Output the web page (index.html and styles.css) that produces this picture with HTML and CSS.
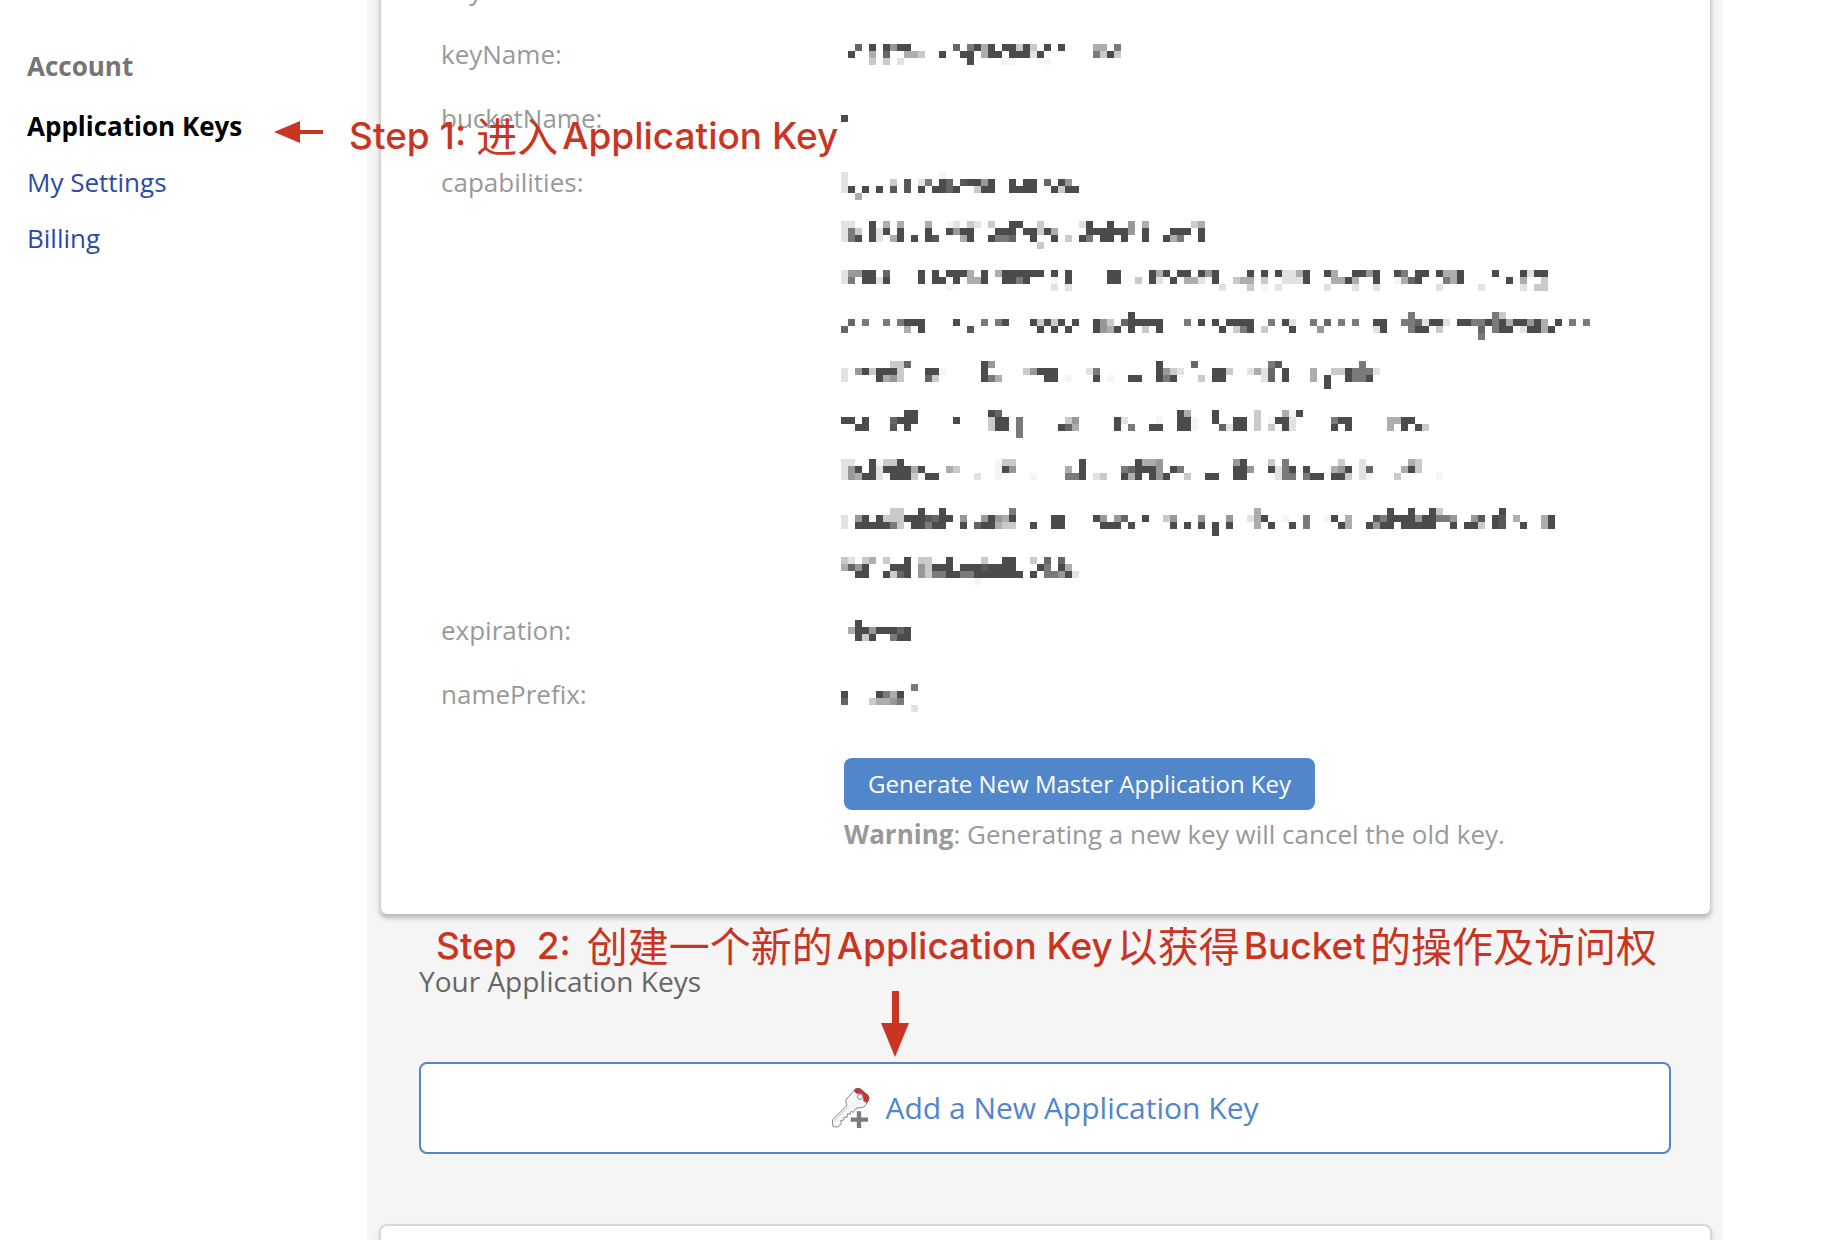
FILE: index.html
```html
<!DOCTYPE html>
<html lang="zh-CN">
<head>
<meta charset="utf-8">
<title>Application Keys</title>
<link rel="stylesheet" href="styles.css">
</head>
<body>
<div class="page">
  <nav class="sidebar">
    <h2 class="sidebar-title">Account</h2>
    <a class="sidebar-link active" href="#keys">Application Keys</a>
    <a class="sidebar-link" href="#settings">My Settings</a>
    <a class="sidebar-link" href="#billing">Billing</a>
  </nav>

  <main class="content">
    <section class="card master-key">
      <dl class="fields">
        <dt>keyID:</dt><dd class="plain">000000000000</dd>
        <dt>keyName:</dt><dd><svg class="mosaic" data-name="keyName"></svg></dd>
        <dt>bucketName:</dt><dd><svg class="mosaic" data-name="bucketName"></svg></dd>
        <dt>capabilities:</dt><dd><svg class="mosaic" data-name="capabilities"></svg></dd>
        <dt>expiration:</dt><dd><svg class="mosaic" data-name="expiration"></svg></dd>
        <dt>namePrefix:</dt><dd><svg class="mosaic" data-name="namePrefix"></svg></dd>
      </dl>
      <div class="generate">
        <button class="generate-button" type="button">Generate New Master Application Key</button>
        <p class="warning"><strong>Warning</strong>: Generating a new key will cancel the old key.</p>
      </div>
    </section>

    <section class="your-keys">
      <h3 class="section-title">Your Application Keys</h3>
      <button class="add-button" type="button">
        <svg class="key-icon" viewBox="36 78 120 126" aria-hidden="true">
          <path d="M109 84 Q117 80 124 84 L147 103 Q152 109 149 116 L139 134 Q135 140 128 139 L111 142 L103 154 L96 151 L93 160 L86 158 L84 169 L76 168 L74 177 L65 179 L67 188 L56 198 L42 197 L40 177 L83 134 L80 117 Z" fill="#f6f6f7" stroke="#85858c" stroke-width="3" stroke-linejoin="round"/>
          <path d="M44 181 L89 136" stroke="#c9c9ce" stroke-width="3"/>
          <path d="M109 84 Q117 80 124 84 L147 103 Q152 109 149 116 L144 125 L134 120 Q136 102 124 97 L112 97 L106 90 Z" fill="#cd3036" stroke="#8d4f58" stroke-width="2"/>
          <circle cx="123" cy="107" r="8" fill="#fff" stroke="#85858c" stroke-width="3"/>
          <path d="M120 148 V202 M92 176 H149" stroke="#fff" stroke-width="18"/>
          <path d="M120 151 V201 M95 176 H147" stroke="#797986" stroke-width="13"/>
        </svg>
        <span>Add a New Application Key</span>
      </button>
    </section>

    <section class="card next-card"></section>
  </main>

  <svg class="note arrow-left" viewBox="0 0 49 22" aria-hidden="true"><path d="M0 11 L26 0 V9 H49 V13 H26 V22 Z"/></svg>
  <p class="note step-one"><span class="step">Step 1:</span><span class="cjk">进入</span><span>Application Key</span></p>
  <p class="note step-two"><span class="step wide"><span>Step</span> <span>2:</span></span><span class="cjk">创建一个新的</span><span>Application Key</span><span class="cjk">以获得</span><span>Bucket</span><span class="cjk">的操作及访问权</span></p>
  <svg class="note arrow-down" viewBox="0 0 28 66" aria-hidden="true"><path d="M11 0 H18 V32 H28 L14 66 L0 32 H11 Z"/></svg>
</div>
<script src="mosaic.js"></script>
</body>
</html>
```
FILE: styles.css
```css
* { box-sizing: border-box; }

body {
  margin: 0;
  background: #fff;
  font-family: "Open Sans", "Noto Sans CJK SC", sans-serif;
  font-size: 26px;
  line-height: 36px;
}

.page {
  position: relative;
  display: flex;
  min-height: 100vh;
  padding-right: 121px;
  overflow: hidden;
}

.sidebar {
  flex: 0 0 367px;
  display: flex;
  flex-direction: column;
  gap: 20px;
  padding: 48px 27px;
}
.sidebar-title {
  margin: 0 0 4px;
  font-size: 26px;
  font-weight: 700;
  color: #757575;
}
.sidebar-link { color: #2c4aa5; text-decoration: none; }
.sidebar-link.active { color: #000; font-weight: 700; }

.content {
  flex: 1;
  min-width: 0;
  display: flex;
  flex-direction: column;
  padding: 0 13px 0 14px;
  background: #f5f5f5;
}

.card {
  background: #fff;
  border-radius: 6px;
  box-shadow: 0 3px 5px 1px rgba(0, 0, 0, 0.26);
}
.master-key { margin-top: -42px; padding: 0 60px 62px; }

.fields {
  display: grid;
  grid-template-columns: 400px 1fr;
  margin: 0;
}
.fields dt { padding: 14px 0; color: #999; }
.fields dd { margin: 0; padding: 22px 0 13px; }
.fields .plain { padding: 14px 3px; color: #666; }
.mosaic { display: block; }

.generate { padding: 32px 0 0 403px; }
.generate-button {
  display: block;
  height: 52px;
  padding: 0 24px;
  border: 0;
  border-radius: 8px;
  background: #5186cb;
  color: #fff;
  font: inherit;
  font-size: 24px;
  white-space: nowrap;
}
.warning { margin: 6px 0 0; color: #999; }

.your-keys { padding: 49px 39px 70px 38px; }
.section-title {
  margin: 0 0 63px;
  font-size: 28px;
  font-weight: 400;
  color: #666;
}
.add-button {
  display: flex;
  align-items: center;
  justify-content: center;
  gap: 14px;
  width: 100%;
  height: 92px;
  border: 2px solid #5585c2;
  border-radius: 8px;
  background: #fff;
  color: #5186cb;
  font: inherit;
  font-size: 30px;
}
.key-icon { width: 40px; height: 42px; }

.next-card {
  flex: 1;
  min-height: 16px;
  margin: 0 -2px;
  border: 2px solid #d8d8d8;
  border-bottom: 0;
  border-radius: 8px 8px 0 0;
  box-shadow: 0 3px 5px rgba(0, 0, 0, 0.15);
}

/* Hand-placed tutorial notes over the page */
.note {
  position: absolute;
  display: flex;
  gap: 4px;
  margin: 0;
  fill: #c93522;
  color: #c93522;
  font-family: Inter, "Noto Sans CJK SC", sans-serif;
  font-size: 37px;
  font-weight: 500;
  line-height: 48px;
  white-space: nowrap;
}
.note .cjk {
  font-family: "Noto Sans CJK SC", sans-serif;
  font-size: 41px;
  font-weight: 400;
  line-height: 44px;
}
.note .step { padding-right: 6px; }
.note .wide { display: flex; gap: 20px; padding-right: 12px; }
.arrow-left { left: 274px; top: 121px; width: 49px; height: 22px; }
.step-one { left: 349px; top: 112px; }
.step-two { left: 436px; top: 922px; }
.arrow-down { left: 881px; top: 991px; width: 28px; height: 66px; }
```
FILE: mosaic.js
```javascript
// Pixelated values on a 7px grid. Each line is one grid row, written as
// "column:shades"; a shade digit runs from 1 (lightest) to 9 (darkest).
const CELL = 7;
const SHADES = ["", "#f5f5f5", "#e2e2e2", "#cacaca", "#adadad", "#989898", "#7a7a7a", "#666666", "#585858", "#4b4b4b"];

const VALUES = {
  keyName: [
    "2:7 4:9 6:9599 16:7 18:6949 23:99393 29:9 31:9 36:44 39:6",
    "1:9 4:4 6:7 9:443 14:9 17:99 20:499 24:9992 28:9 36:6393",
    "4:3 6:3 8:2 18:9 23:11 29:1"
  ],
  bucketName: ["", "0:9"],
  capabilities: [
    "0:2 14:1",
    "0:2 7:3 9:8 11:26 14:97 17:89959 24:9 26:99 29:7 31:95",
    "0:29 3:9 5:9 7:8 9:8 11:9 13:9979 19:399 24:9999 30:9399",
    "2:4", "", "", "",
    "0:22 4:9 6:4 8:4 12:4 15:12 18:32 21:3 24:99 28:3 34:29 38:9 41:5 43:4 50:34",
    "0:263 4:929 8:9 12:9 15:9599 22:999 26:99394 35:9999995 43:9 47:999 51:9",
    "0:269 4:92 7:49 10:9 12:98 17:49 21:9667 27:9 30:9 32:3 34:96 37:99 40:9 43:9 46:946 51:9",
    "28:3", "", "", "",
    "0:25599 6:7 11:9 13:9 15:9994 20:9 22:4999999 30:9 32:9 38:99 44:949 48:99 51:959 58:9 60:9 62:92249 69:94 73:9959 79:96 82:99 85:9449 93:9 97:9299",
    "0:26 3:9929 11:9 13:99 16:9 18:449 23:9969 30:1 32:9 38:99 42:3 44:92 47:9 49:442 53:9 56:344 60:3 63:2229 70:4494 76:9 79:1479 86:649 95:9 97:4 100:3",
    "15:1 30:2 32:2 54:2 58:3 60:1 62:2 69:2 73:2 76:2 85:2 91:2 97:2 99:33",
    "", "", "",
    "41:9 81:6 93:63",
    "1:7 3:6 6:6 8:6999 16:9 20:6 22:69 27:93939 33:9 36:953 40:799999 49:6 51:9 53:9 55:9999 61:6 63:92 67:6 69:7 71:6 73:6 76:99 80:6672992 88:9966969499594 102:9 104:6 106:6",
    "0:7 9:4 11:9 18:8 28:9 30:9 32:9 36:9549 41:9 43:3 45:9 54:9 56:369 60:3 64:9 68:5 76:29 81:699 85:3 91:7 93:699 97:29949",
    "91:6", "", "", "",
    "7:337 20:95 45:9 50:7 61:68 74:6",
    "0:2 2:5939993 12:991 20:9 26:35999 35:26 45:9532 53:993 58:2427 63:9 67:4 70:3396662",
    "0:2 5:9453 12:73 20:964 29:99 32:1 36:9 38:1 41:99 45:969 51:3 53:99 60:27 63:9 67:4 69:9 72:9669",
    "69:9", "", "", "",
    "9:99 21:97 48:94 53:9 59:3 63:419",
    "0:99 3:9 7:7999 16:9 21:399 25:6 32:35 39:92 45:1 48:991 53:9 56:99 59:3 61:1992 70:699 78:4499",
    "2:99 7:8 9:9 21:399 25:6 31:974 39:9 41:6 44:99 48:991 54:7299 59:3 61:3 63:92 70:9 72:9 78:4 80:9 82:93",
    "25:6", "", "", "",
    "0:22 4:91339 22:133 34:9 42:9445 56:59 61:3 63:6 71:3 74:2 81:43",
    "0:259 4:92999949 15:43 22:195 32:4 34:9 40:679995 47:96 56:995 61:9269 66:9 70:459 74:27 80:493",
    "0:254992 7:9993 12:99 19:2 22:1 27:1 32:669 36:23 40:949 44:959 49:3 52:99 56:99 62:266 66:699 70:993 74:21 79:3 85:1",
    "", "", "", "",
    "7:33 11:9 14:9 24:6 59:4 78:9 81:9 84:93 94:9",
    "0:2 2:59193339998799 17:5 20:59549 30:99 36:95 39:57 43:9 46:35 51:5 55:5 58:249 63:1 66:6 69:19 72:4 76:869999599665 90:58 93:98 96:4 100:49",
    "0:2 2:9999963 10:99699 17:9 19:799433 27:9 30:99 37:999 41:9 47:9 49:9 51:9 53:9 55:9 59:4 61:9 64:9 66:6 71:94 75:9599 80:99999 87:9 89:993 93:98 97:9 100:49",
    "53:9", "", "", "",
    "0:32 3:34 6:3 9:9 11:33 15:9 20:3 23:99 27:3 29:7 31:7",
    "0:4759 7:999 11:53999 17:99989999 28:96 31:94",
    "2:99 6:9379 11:536699669999999 27:9 29:66592",
    "19:1"
  ],
  expiration: ["2:9", "1:499599979", "2:939 7:699"],
  namePrefix: ["10:6", "0:9 5:9649", "0:7 4:34456", "10:2"]
};

function rowCells(line) {
  return line.split(" ").filter(Boolean).flatMap(run => {
    const [start, shades] = run.split(":");
    return [...shades].map((shade, i) => ({ column: Number(start) + i, shade: Number(shade) }));
  });
}

document.querySelectorAll(".mosaic").forEach(svg => {
  const rows = VALUES[svg.dataset.name].map(rowCells);
  const columns = Math.max(...rows.flat().map(cell => cell.column)) + 1;
  svg.setAttribute("width", columns * CELL);
  svg.setAttribute("height", rows.length * CELL);
  svg.setAttribute("shape-rendering", "crispEdges");
  rows.forEach((cells, row) => cells.forEach(({ column, shade }) => {
    const rect = document.createElementNS("http://www.w3.org/2000/svg", "rect");
    rect.setAttribute("x", column * CELL);
    rect.setAttribute("y", row * CELL);
    rect.setAttribute("width", CELL);
    rect.setAttribute("height", CELL);
    rect.setAttribute("fill", SHADES[shade]);
    svg.append(rect);
  }));
});
```
